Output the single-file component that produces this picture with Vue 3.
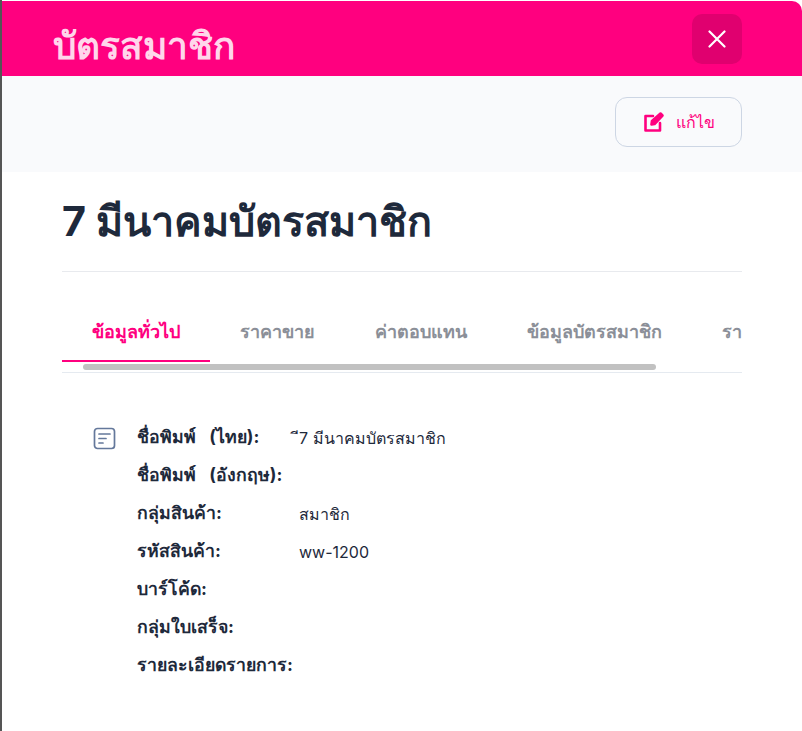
<script setup>
const tabs = ['ข้อมูลทั่วไป', 'ราคาขาย', 'ค่าตอบแทน', 'ข้อมูลบัตรสมาชิก', 'ราคาสมาชิก']
const rows = [
  ['ชื่อพิมพ์ (ไทย):', 'ี7 มีนาคมบัตรสมาชิก'],
  ['ชื่อพิมพ์ (อังกฤษ):', ''],
  ['กลุ่มสินค้า:', 'สมาชิก'],
  ['รหัสสินค้า:', 'ww-1200'],
  ['บาร์โค้ด:', ''],
  ['กลุ่มใบเสร็จ:', ''],
  ['รายละเอียดรายการ:', ''],
]
</script>

<template>
  <div class="page">
    <div class="modal">
      <header class="head">
        <h2 class="head-title">บัตรสมาชิก</h2>
        <button class="close" aria-label="ปิด">
          <svg width="18" height="18" viewBox="0 0 18 18" fill="none" stroke="#fff" stroke-width="2.2" stroke-linecap="round"><path d="M1.500 1.500 16.500 16.500M16.500 1.500 1.500 16.500"/></svg>
        </button>
      </header>
      <div class="bar">
        <button class="edit">
          <svg width="22" height="22" viewBox="0 0 22 22" fill="none" stroke="#ff007f" stroke-width="2.6" stroke-linecap="round" stroke-linejoin="round"><path d="M10 5H2.500v14.500H17V12"/><path d="M8.500 13.500 9 10 17.500 2.500 19.500 4.500 11.500 13Z" fill="#ff007f"/></svg>
          <span>แก้ไข</span>
        </button>
      </div>
      <div class="body">
        <h1 class="title">7 มีนาคมบัตรสมาชิก</h1>
        <div class="tabs-wrap">
          <div class="tabs">
            <div v-for="(t, i) in tabs" :key="t" class="tab" :class="{ active: i === 0 }">{{ t }}</div>
          </div>
          <div class="thumb"></div>
        </div>
        <section class="info">
          <svg class="doc" width="24" height="24" viewBox="0 0 24 24" fill="none" stroke="#64789b" stroke-width="1.7" stroke-linecap="round"><rect x="2.500" y="2.500" width="20" height="20" rx="3"/><path d="M7 8h11M7 12.500h7M7 17h4"/></svg>
          <dl class="rows">
            <div v-for="r in rows" :key="r[0]" class="row">
              <dt>{{ r[0] }}</dt>
              <dd>{{ r[1] }}</dd>
            </div>
          </dl>
        </section>
      </div>
    </div>
  </div>
</template>

<style>
html, body { margin: 0; background: #fff; overflow: hidden; }
</style>

<style scoped>
.page {
  width: 802px;
  height: 731px;
  box-sizing: border-box;
  padding-top: 1px;
  border-left: 2px solid #555;
  background: #fff;
  overflow: hidden;
  font-family: Inter, "Liberation Sans", sans-serif;
}
.modal { width: 800px; }
.head {
  height: 75px;
  box-sizing: border-box;
  padding: 0 60px 0 51px;
  display: flex;
  align-items: center;
  justify-content: space-between;
  background: #ff007f;
  border-radius: 0 10px 0 0;
}
.head-title {
  margin: 14px 0 0;
  font-size: 37px;
  font-weight: 700;
  color: #ffd6eb;
  line-height: 1;
}
.close {
  width: 50px;
  height: 50px;
  border: 0;
  padding: 0;
  border-radius: 10px;
  background: #e0006f;
  display: flex;
  align-items: center;
  justify-content: center;
}
.bar {
  height: 96px;
  box-sizing: border-box;
  padding: 21px 60px 0 0;
  display: flex;
  justify-content: flex-end;
  align-items: flex-start;
  background: #f9fafc;
}
.edit {
  width: 127px;
  height: 50px;
  box-sizing: border-box;
  border: 1px solid #cdd6e4;
  border-radius: 12px;
  background: #f9fafc;
  display: flex;
  align-items: center;
  justify-content: center;
  gap: 11px;
  color: #ff007f;
  font: 500 16px Inter, "Liberation Sans", sans-serif;
}
.body { padding: 0 60px; }
.title {
  margin: 0;
  height: 100px;
  box-sizing: border-box;
  border-bottom: 1px solid #e8eaee;
  display: flex;
  align-items: center;
  font-size: 41.3px;
  font-weight: 700;
  color: #1e293b;
}
.tabs-wrap {
  position: relative;
  width: 680px;
  height: 101px;
  box-sizing: border-box;
  border-bottom: 1px solid #e5eaf0;
  overflow: hidden;
}
.tabs {
  display: flex;
  padding-top: 36px;
  white-space: nowrap;
}
.tab {
  flex: none;
  height: 54px;
  box-sizing: border-box;
  padding: 12px 30px 0;
  font-size: 18px;
  font-weight: 600;
  line-height: 24px;
  color: #8b8f98;
}
.tab.active {
  color: #ff007f;
  border-bottom: 2px solid #ff007f;
}
.thumb {
  position: absolute;
  left: 21px;
  top: 92px;
  width: 573px;
  height: 6px;
  border-radius: 3px;
  background: #c1c1c1;
}
.info {
  display: flex;
  align-items: flex-start;
  padding: 46px 0 0 30px;
}
.doc { flex: none; margin: 7px 21px 0 0; }
.rows { margin: 0; flex: 1; }
.row {
  display: grid;
  grid-template-columns: 162px 1fr;
  height: 38px;
  align-items: center;
  font-size: 16px;
  color: #1e293b;
}
dt { font-size: 17.7px; word-spacing: 9px; font-weight: 700; white-space: nowrap; line-height: 24px; margin-top: -2px; }
dd { margin: 0; font-weight: 400; }
</style>
